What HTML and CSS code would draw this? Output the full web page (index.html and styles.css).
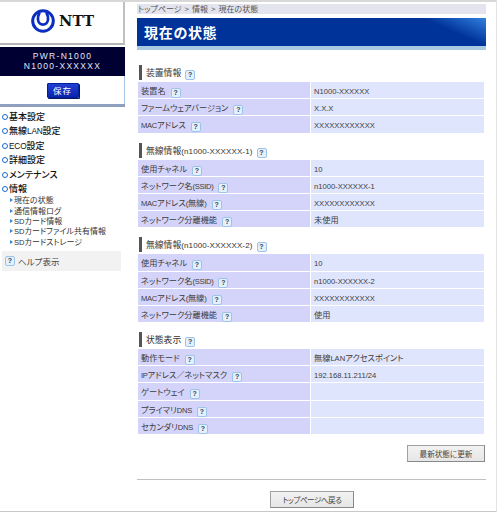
FILE: index.html
```html
<!DOCTYPE html>
<html lang="ja">
<head>
<meta charset="utf-8">
<title>現在の状態</title>
<link rel="stylesheet" href="styles.css">
</head>
<body>
<div class="page">
  <aside class="side">
    <div class="logo">
      <svg class="mark" viewBox="0 0 24 24" width="24" height="24" aria-hidden="true">
        <circle cx="12" cy="12" r="10.3" fill="none" stroke="#0a2fc0" stroke-width="3"/>
        <path d="M8.7 3.5C5.6 8.8 6.6 15.6 12 15.6S18.4 8.8 15.3 3.5" fill="none" stroke="#0a2fc0" stroke-width="2.6"/>
      </svg>
      <span class="ntt">NTT</span>
    </div>
    <div class="device">
      <div>PWR-N1000</div>
      <div>N1000-XXXXXX</div>
    </div>
    <div class="save"><button class="savebtn">保存</button></div>
    <div class="savebar"></div>
    <nav class="nav">
      <div class="navitem"><i class="dot"></i>基本設定</div>
      <div class="navitem"><i class="dot"></i>無線<span class="l">LAN</span>設定</div>
      <div class="navitem"><i class="dot"></i><span class="l">ECO</span>設定</div>
      <div class="navitem"><i class="dot"></i>詳細設定</div>
      <div class="navitem"><i class="dot"></i>メンテナンス</div>
      <div class="navitem"><i class="dot"></i>情報</div>
      <div class="subnav">
        <div class="subitem"><i class="tri"></i>現在の状態</div>
        <div class="subitem"><i class="tri"></i>通信情報ログ</div>
        <div class="subitem"><i class="tri"></i><span class="l">SD</span>カード情報</div>
        <div class="subitem"><i class="tri"></i><span class="l">SD</span>カードファイル共有情報</div>
        <div class="subitem"><i class="tri"></i><span class="l">SD</span>カードストレージ</div>
      </div>
    </nav>
    <div class="help"><span class="q">?</span>ヘルプ表示</div>
  </aside>
  <main class="main">
    <div class="crumb">トップページ<span class="sep">&gt;</span>情報<span class="sep">&gt;</span>現在の状態</div>
    <h1 class="title">現在の状態</h1>

    <h2 class="head first">装置情報<span class="q">?</span></h2>
    <div class="grid">
      <div class="k">装置名<span class="q">?</span></div><div class="v"><span class="l">N1000-XXXXXX</span></div>
      <div class="k">ファームウェアバージョン<span class="q">?</span></div><div class="v"><span class="l">X.X.X</span></div>
      <div class="k"><span class="l">MAC</span>アドレス<span class="q">?</span></div><div class="v"><span class="l">XXXXXXXXXXXX</span></div>
    </div>

    <h2 class="head">無線情報<span class="l">(n1000-XXXXXX-1)</span><span class="q">?</span></h2>
    <div class="grid">
      <div class="k">使用チャネル<span class="q">?</span></div><div class="v"><span class="l">10</span></div>
      <div class="k">ネットワーク名<span class="l">(SSID)</span><span class="q">?</span></div><div class="v"><span class="l">n1000-XXXXXX-1</span></div>
      <div class="k"><span class="l">MAC</span>アドレス<span class="l">(</span>無線<span class="l">)</span><span class="q">?</span></div><div class="v"><span class="l">XXXXXXXXXXXX</span></div>
      <div class="k">ネットワーク分離機能<span class="q">?</span></div><div class="v">未使用</div>
    </div>

    <h2 class="head">無線情報<span class="l">(n1000-XXXXXX-2)</span><span class="q">?</span></h2>
    <div class="grid">
      <div class="k">使用チャネル<span class="q">?</span></div><div class="v"><span class="l">10</span></div>
      <div class="k">ネットワーク名<span class="l">(SSID)</span><span class="q">?</span></div><div class="v"><span class="l">n1000-XXXXXX-2</span></div>
      <div class="k"><span class="l">MAC</span>アドレス<span class="l">(</span>無線<span class="l">)</span><span class="q">?</span></div><div class="v"><span class="l">XXXXXXXXXXXX</span></div>
      <div class="k">ネットワーク分離機能<span class="q">?</span></div><div class="v">使用</div>
    </div>

    <h2 class="head">状態表示<span class="q">?</span></h2>
    <div class="grid">
      <div class="k">動作モード<span class="q">?</span></div><div class="v">無線<span class="l">LAN</span>アクセスポイント</div>
      <div class="k"><span class="l">IP</span>アドレス／ネットマスク<span class="q">?</span></div><div class="v"><span class="l">192.168.11.211/24</span></div>
      <div class="k">ゲートウェイ<span class="q">?</span></div><div class="v"></div>
      <div class="k">プライマリ<span class="l">DNS</span><span class="q">?</span></div><div class="v"></div>
      <div class="k">セカンダリ<span class="l">DNS</span><span class="q">?</span></div><div class="v"></div>
    </div>

    <div class="refresh"><button class="btn wide">最新状態に更新</button></div>
    <hr class="rule">
    <div class="back"><button class="btn wider">トップページへ戻る</button></div>
  </main>
</div>
</body>
</html>
```
FILE: styles.css
```css
* { box-sizing: border-box; }
html, body { margin: 0; padding: 0; background: #fff; }
body {
  width: 500px;
  height: 515px;
  overflow: hidden;
  font-family: "Noto Sans CJK JP", "Liberation Sans", sans-serif;
  font-size: 8.2px;
  color: #3c3c3c;
  font-feature-settings: "palt";
}
.page {
  display: flex;
  width: 497px;
  height: 512px;
  border-top: 2px solid #d8d8d8;
  border-right: 1px solid #e4e4e4;
  border-bottom: 1px solid #c8c8c8;
}
.l { font-family: "Liberation Sans", sans-serif; font-size: 7.6px; }

.side { width: 125px; flex: none; }
.logo {
  height: 43px;
  display: flex;
  align-items: center;
  padding: 0 0 4px 31px;
  gap: 4px;
  border-right: 2px solid #c0c0c0;
  border-bottom: 2px solid #b4b4b4;
}
.mark { flex: none; }
.ntt {
  font-family: "DejaVu Serif", "Liberation Serif", serif;
  font-weight: 900;
  font-size: 14.5px;
  color: #111;
  letter-spacing: .3px;
}
.device {
  margin-top: 2px;
  height: 29px;
  background: #000033;
  color: #e4e4f0;
  text-align: center;
  font-family: "Liberation Sans", sans-serif;
  font-size: 8.5px;
  letter-spacing: 1.3px;
  line-height: 9.5px;
  padding-top: 5px;
}
.save {
  height: 28px;
  display: flex;
  justify-content: center;
  align-items: center;
  padding: 0 0 0 1px;
  border-right: 1px solid #a8c4e4;
}
.savebtn {
  width: 32px;
  height: 15px;
  padding: 0;
  border: 1px solid #00209a;
  border-radius: 1px;
  background: linear-gradient(#2340d0, #0a24b0);
  box-shadow: 1px 1px 0 #0a1a60;
  color: #fff;
  font: 8.5px "Noto Sans CJK JP", sans-serif;
  letter-spacing: 1px;
}
.savebar { height: 3px; background: #8e9fbf; }

.nav { padding-top: 3px; }
.navitem {
  height: 14.4px;
  line-height: 14.4px;
  font-size: 9px;
  font-weight: 500;
  color: #111;
}
.navitem .l { font-size: 8.3px; letter-spacing: -.2px; }
.dot {
  display: inline-block;
  width: 6px;
  height: 6px;
  margin: 0 1px 0 2px;
  border: 1.7px solid #1a6ad8;
  border-radius: 50%;
}
.subnav { padding-left: 10px; margin-top: -1px; }
.subitem {
  height: 10.3px;
  line-height: 10.3px;
  font-size: 8px;
  font-weight: 400;
  color: #333;
}
.subitem .l { font-size: 7.6px; }
.tri {
  display: inline-block;
  width: 0;
  height: 0;
  margin-right: 1px;
  vertical-align: 1px;
  border-left: 3px solid #3a86d8;
  border-top: 2px solid transparent;
  border-bottom: 2px solid transparent;
}
.help {
  margin: 4px 0 0 2px;
  width: 119px;
  height: 20px;
  background: #f2f2f2;
  display: flex;
  align-items: center;
  padding-left: 3px;
  font-size: 8.5px;
  color: #444;
}
.help .q { margin: 0 3px 0 0; }

.q {
  display: inline-block;
  width: 10px;
  height: 10px;
  margin-left: 5px;
  border: 1px solid #9cc4e8;
  border-radius: 2px;
  background: #e4f0fc;
  color: #345;
  font: 700 7px/8px "Liberation Sans", sans-serif;
  text-align: center;
  vertical-align: -1px;
  flex: none;
}

.main { margin-left: 12px; width: 349px; }
.crumb {
  margin-top: 2px;
  height: 10px;
  padding-left: 1px;
  background: #e4e4ee;
  font-size: 8px;
  line-height: 10px;
  color: #555;
}
.sep { margin: 0 3px; }
.title {
  margin: 4px 0 0;
  height: 32px;
  padding: 0 0 4px 7px;
  font-size: 14px;
  line-height: 28px;
  letter-spacing: .7px;
  font-weight: 700;
  color: #fff;
  border-bottom: 4px solid #a9c8e2;
  background: linear-gradient(204deg, #2f82dc 0, #1b5cc0 12px, #003399 26px) no-repeat;
}
.head {
  margin: 10px 0 2px 2px;
  height: 15px;
  padding-left: 4px;
  border-left: 3px solid #555;
  font-size: 8.8px;
  font-weight: 400;
  line-height: 15px;
  color: #333;
  white-space: nowrap;
}
.head .l { font-size: 8px; letter-spacing: .12px; }
.head .q { margin-left: 4px; }
.head.first { margin-top: 15px; }
.grid {
  width: 346px;
  margin-left: 1px;
  display: grid;
  grid-template-columns: 172px 173px;
  grid-auto-rows: 16.2px;
  gap: 1px;
}
.k, .v {
  padding-left: 3px;
  line-height: 16px;
  white-space: nowrap;
}
.k { background: #d4d4fa; }
.v { background: #dfe5fd; }
.k .l { letter-spacing: -.3px; }
.refresh {
  display: flex;
  justify-content: flex-end;
  margin: 11px 1px 0 0;
}
.btn {
  height: 17px;
  padding: 0;
  border: 1px solid #a0a0a0;
  border-right-color: #888;
  border-bottom-color: #888;
  background: linear-gradient(#f2f2f2, #e6e6e6);
  color: #444;
  font: 7.6px "Noto Sans CJK JP", sans-serif;
  font-feature-settings: "palt";
}
.wide { width: 78px; }
.wider { width: 84px; letter-spacing: -.5px; }
.rule {
  margin: 17px 0 0;
  border: 0;
  border-top: 1px solid #c0c0c0;
  height: 0;
}
.back {
  display: flex;
  justify-content: center;
  margin-top: 11px;
  padding-left: 1px;
}
```
